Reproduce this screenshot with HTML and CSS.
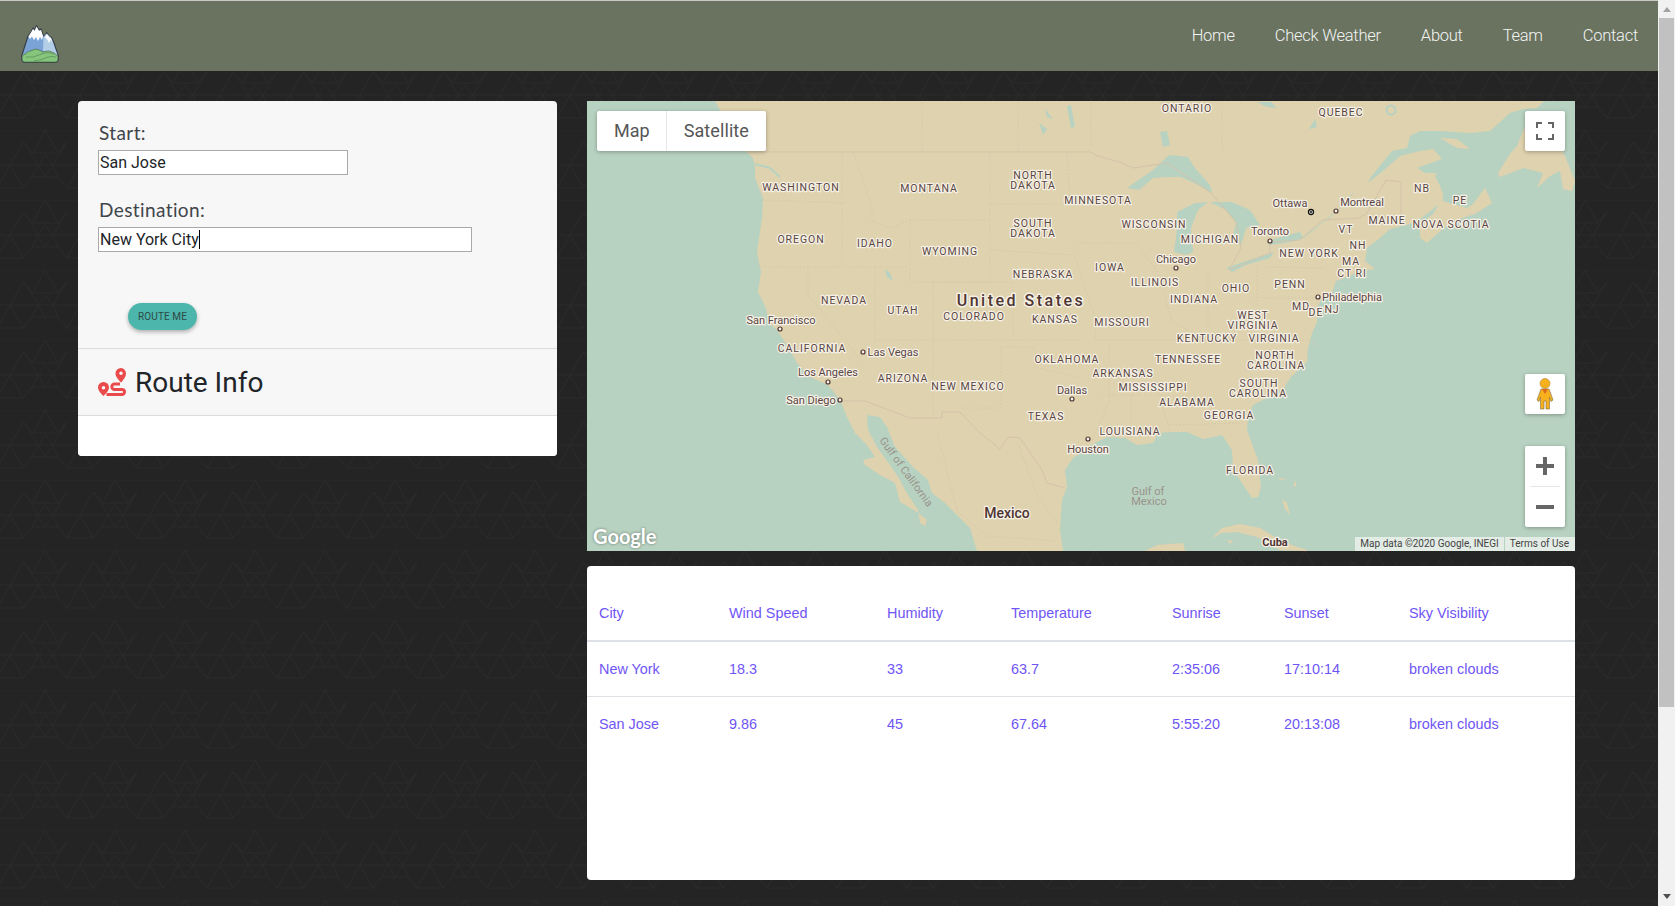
FILE: index.html
```html
<!DOCTYPE html>
<html lang="en">
<head>
    <meta charset="UTF-8">
    <meta name="viewport" content="width=device-width, initial-scale=1.0">
    <title>Route Weather</title>
    <link rel="stylesheet" href="styles.css">
</head>
<body>
<div class="page">

    <!-- Top bar -->
    <header class="site-header">
        <a class="brand" href="#">
            <svg class="brand-logo" viewBox="0 0 38 38" aria-label="logo">
                <path d="M.7 31 L7 11 L10 7 L12 3 L13.5 5 L15.7 .6 L18 5 L20 4 L22 10 L24 12 L25.7 7.5 L28 11 L30.5 12.5 L33 18 L37.3 31 Q38 37.4 34 37.4 H4 Q0 37.4 .7 31 Z" fill="#7ba4d6" stroke="#3b4048" stroke-width="1.2" stroke-linejoin="round"/>
                <path d="M22.5 12 L25.7 8.5 L30.2 13 L36.5 30 L22 26 Z" fill="#b3cfe8"/>
                <path d="M7.5 11.5 L10 7.5 L12 4 L13.5 6 L15.7 1.5 L18 6 L20 5 L22 11 L21 15 L19 12 L17 16 L15 12 L13 15 L11 11.5 L9 14 Z" fill="#fff"/>
                <path d="M24 12.5 L25.7 9 L28 12 L30 13.5 L31.5 18 L29.5 15 L28 18 L26 14 Z" fill="#fff"/>
                <path d="M1.2 31 Q7 25.5 15 24 Q19 25 22 27 Q25 26 28 26 Q33 27 36.9 31 Q37.5 37 34 37 H4 Q.5 37 1.2 31 Z" fill="#86c57c" stroke="#4a6a4c" stroke-width=".7"/>
                <path d="M5 32 Q13 33 18 30 Q26 26 33 29 M13 36 Q22 35 27 32 Q31 31 35 32" fill="none" stroke="#4f7f50" stroke-width=".6"/>
            </svg>
        </a>
        <nav class="site-nav">
            <a href="#">Home</a>
            <a href="#">Check Weather</a>
            <a href="#">About</a>
            <a href="#">Team</a>
            <a href="#">Contact</a>
        </nav>
    </header>

    <main class="content">

        <!-- Route form -->
        <section class="route-card">
            <form class="route-form">
                <label class="field-label" for="start">Start:</label>
                <input class="field field-short" id="start" type="text" value="San Jose">
                <label class="field-label field-label-next" for="destination">Destination:</label>
                <div class="field-wrap">
                    <input class="field field-long" id="destination" type="text" value="New York City">
                    <span class="caret"></span>
                </div>
                <button class="route-btn" type="button">Route me</button>
            </form>
            <div class="route-head">
                <svg class="route-icon" viewBox="0 0 28 28" aria-hidden="true">
                    <path d="M23 0 A5.5 5.5 0 0 0 17.5 5.5 C17.5 8.5 21 12.5 23 14.5 C25 12.5 28 8.5 28 5.5 A5.5 5.5 0 0 0 23 0 Z M23 3.5 A1.8 1.8 0 1 1 23 7.1 A1.8 1.8 0 1 1 23 3.5 Z" fill="#ea4a4c" fill-rule="evenodd"/>
                    <path d="M5.5 14 A5.5 5.5 0 0 0 0 19.5 C0 22.5 3.5 26 5.5 28 C7.5 26 11 22.5 11 19.5 A5.5 5.5 0 0 0 5.5 14 Z M5.5 17.9 A1.8 1.8 0 1 1 5.5 21.5 A1.8 1.8 0 1 1 5.5 17.9 Z" fill="#ea4a4c" fill-rule="evenodd"/>
                    <path d="M22 16 H16.5 A2.7 2.7 0 0 0 16.5 21.4 H24 A2.4 2.4 0 0 1 24 26.4 H8.5" fill="none" stroke="#ea4a4c" stroke-width="3"/>
                </svg>
                <h2 class="route-title">Route Info</h2>
            </div>
            <div class="route-body"></div>
        </section>

        <div class="right-col">

            <!-- Map -->
            <div class="map">
                <svg class="map-canvas" viewBox="0 0 988 450" width="988" height="450">
                    <rect class="water" width="988" height="450"/>
                    <path class="land" d="M128 0 L133 9 L140 28 L150 44 L160 51 L166 57 L168 66 L168 77 L176 97 L175 117 L170 151 L174 171 L171 191 L179 207 L182 222 L190 229 L203 249 L210 262 L223 276 L241 284 L253 299 L260 316 L268 332 L280 344 L288 356 L276 359 L278 364 L293 374 L308 382 L313 401 L330 411 L340 419 L338 425 L333 422 L331 409 L323 397 L318 389 L313 379 L301 361 L290 346 L281 329 L280 314 L293 316 L300 326 L308 346 L326 366 L341 379 L345 392 L358 402 L383 427 L390 450 L476 450 L473 429 L475 399 L480 386 L478 369 L486 357 L508 342 L520 336 L538 337 L550 344 L566 342 L571 332 L585 331 L600 331 L616 338 L635 334 L645 349 L646 367 L653 379 L665 397 L671 396 L674 386 L671 359 L660 329 L661 316 L666 304 L676 299 L697 287 L704 276 L720 261 L721 247 L725 232 L730 221 L730 207 L735 197 L745 192 L749 180 L760 176 L773 170 L788 168 L778 160 L780 147 L793 137 L803 128 L823 123 L836 116 L852 103 L846 113 L833 123 L833 137 L840 142 L851 132 L866 120 L888 113 L905 102 L898 87 L886 103 L880 107 L866 103 L856 100 L856 93 L853 85 L848 75 L850 72 L838 72 L830 67 L855 58 L846 48 L833 50 L813 55 L796 70 L773 88 L766 92 L780 85 L783 77 L805 50 L820 47 L823 35 L833 30 L853 30 L883 32 L903 30 L923 12 L936 8 L950 7 L957 0 Z"/>
                    <path class="land" d="M911 72 L923 53 L930 45 L940 20 L960 25 L978 55 L988 80 L985 90 L976 88 L973 70 L963 75 L950 87 L956 72 L936 67 L913 76 Z"/>
                    <path class="land" d="M853 37 L870 38 L883 48 L870 47 Z"/>
                    <path class="land" d="M625 437 L635 427 L653 423 L673 427 L696 441 L720 449 L720 450 L693 449 L670 436 L650 431 L635 432 Z"/>
                    <path class="land" d="M558 450 L570 444 L596 442 L598 450 Z"/>
                    <path class="land" d="M695 398 L700 402 L703 414 L698 408 Z M691 377 L700 378 L694 379 Z M706 386 L709 379 L709 385 Z M640 439 L646 440 L643 443 Z"/>
                    <!-- Lakes -->
                    <path class="water" d="M540 87 L566 69 L582 54 L601 56 L608 67 L623 84 L625 92 L611 84 L594 76 L580 76 L566 77 L552 89 Z"/>
                    <path class="water" d="M587 151 L590 127 L590 111 L608 102 L621 101 L611 109 L604 127 L606 151 L599 154 Z"/>
                    <path class="water" d="M623 101 L645 101 L663 109 L673 124 L659 127 L654 144 L645 141 L649 121 L639 109 Z"/>
                    <path class="water" d="M639 167 L656 161 L687 151 L683 157 L659 164 L645 171 Z"/>
                    <path class="water" d="M680 141 L690 137 L713 131 L716 137 L704 141 L683 144 Z"/>
                    <path class="water" d="M573 31 L580 30 L583 44 L576 46 Z M480 5 L484 4 L488 26 L484 27 Z M452 22 L460 28 L456 34 Z M670 1 L684 1 L690 7 L680 6 Z M722 28 L728 18 L730 26 Z M298 168 L303 172 L306 180 L300 176 Z M458 8 L466 18 L460 16 Z"/>
                    <path class="river" d="M168 63 L183 67 L193 76"/>
                    <path class="river river-thin" d="M716 137 L735 122 L750 110 L766 92"/>
                    <circle class="ring" cx="804" cy="9" r="4.5"/>
                    <!-- State lines -->
                    <path class="state" d="M255 51 V164 M176 99 L260 102 M171 166 H321 M266 51 L277 81 L285 106 V120 L303 127 L323 119 M323 119 H403 V181 H323 Z M335 1 V51 M431 1 V51 M403 51 V119 M403 103 H483 M403 149 L487 154 M480 51 L483 103 M288 166 V239 M221 166 V194 L275 260 M346 181 V317 M346 181 H426 V239 M288 239 H493 M414 246 V307 H373 M414 246 H448 V266 L493 277 M504 1 V45 M489 142 H549 M487 154 L509 219 M509 219 L508 239 H721 L732 246 M515 294 H601 M544 294 V322 M573 294 L582 329 M582 324 L656 322 M621 171 V225 M670 164 V205 M678 166 L738 167 M666 197 H731 M549 142 L570 170 L585 220 L620 240 M635 0 V40 L636 50 M522 239 V300 L505 340 M432 345 L450 395 L470 420 M350 330 L370 410 L400 435 L470 440"/>
                    <!-- Country lines -->
                    <path class="border" d="M160 51 H504 L508 54 L532 61 L546 67 L580 62 L623 91 L649 121 L654 147 L642 169 L683 152 L683 141 L713 139 L735 119 L773 117 L780 112 L799 79 L814 81 L814 117 L816 125"/>
                    <path class="border" d="M256 300 H278 L323 317 H355 V311 H373 L393 332 L413 348 L421 336 L433 337 L455 369 L460 382 L478 387"/>
                    <!-- Regions -->
                    <g class="lbl-state">
                        <text x="599" y="7">ONTARIO</text><text x="753" y="11">QUEBEC</text>
                        <text x="213" y="86">WASHINGTON</text><text x="341" y="87">MONTANA</text>
                        <text x="445" y="74">NORTH</text><text x="445" y="84">DAKOTA</text>
                        <text x="445" y="122">SOUTH</text><text x="445" y="132">DAKOTA</text>
                        <text x="213" y="138">OREGON</text><text x="287" y="142">IDAHO</text>
                        <text x="362" y="150">WYOMING</text><text x="455" y="173">NEBRASKA</text>
                        <text x="256" y="199">NEVADA</text><text x="315" y="209">UTAH</text>
                        <text x="386" y="215">COLORADO</text><text x="467" y="218">KANSAS</text>
                        <text x="510" y="99">MINNESOTA</text><text x="566" y="123">WISCONSIN</text>
                        <text x="622" y="138">MICHIGAN</text><text x="522" y="166">IOWA</text>
                        <text x="567" y="181">ILLINOIS</text><text x="606" y="198">INDIANA</text>
                        <text x="648" y="187">OHIO</text><text x="702" y="183">PENN</text>
                        <text x="721" y="152">NEW YORK</text><text x="799" y="119">MAINE</text>
                        <text x="834" y="87">NB</text><text x="872" y="99">PE</text>
                        <text x="863" y="123">NOVA SCOTIA</text><text x="758" y="128">VT</text>
                        <text x="770" y="144">NH</text><text x="763" y="160">MA</text>
                        <text x="764" y="172">CT RI</text><text x="713" y="205">MD</text>
                        <text x="728" y="211">DE</text><text x="744" y="208">NJ</text>
                        <text x="665" y="214">WEST</text><text x="665" y="224">VIRGINIA</text>
                        <text x="534" y="221">MISSOURI</text><text x="619" y="237">KENTUCKY</text>
                        <text x="686" y="237">VIRGINIA</text><text x="600" y="258">TENNESSEE</text>
                        <text x="687" y="254">NORTH</text><text x="688" y="264">CAROLINA</text>
                        <text x="479" y="258">OKLAHOMA</text><text x="535" y="272">ARKANSAS</text>
                        <text x="565" y="286">MISSISSIPPI</text><text x="671" y="282">SOUTH</text>
                        <text x="670" y="292">CAROLINA</text><text x="599" y="301">ALABAMA</text>
                        <text x="641" y="314">GEORGIA</text><text x="458" y="315">TEXAS</text>
                        <text x="542" y="330">LOUISIANA</text><text x="662" y="369">FLORIDA</text>
                        <text x="224" y="247">CALIFORNIA</text><text x="315" y="277">ARIZONA</text>
                        <text x="380" y="285">NEW MEXICO</text>
                    </g>
                    <!-- Cities -->
                    <g class="lbl-city">
                        <text x="194" y="219">San Francisco</text><text x="589" y="158">Chicago</text>
                        <text x="683" y="130">Toronto</text><text x="703" y="102">Ottawa</text>
                        <text x="775" y="101">Montreal</text><text x="765" y="196">Philadelphia</text>
                        <text x="485" y="289">Dallas</text><text x="501" y="348">Houston</text>
                        <text x="306" y="251">Las Vegas</text><text x="241" y="271">Los Angeles</text>
                        <text x="224" y="299">San Diego</text>
                    </g>
                    <g class="dots">
                        <circle cx="193" cy="228" r="2"/><circle cx="589" cy="167" r="2"/>
                        <circle cx="683" cy="140" r="2"/><circle cx="749" cy="110" r="2"/>
                        <circle cx="731" cy="196" r="2"/><circle cx="485" cy="298" r="2"/>
                        <circle cx="501" cy="338" r="2"/><circle cx="276" cy="251" r="2"/>
                        <circle cx="241" cy="281" r="2"/><circle cx="253" cy="299" r="2"/>
                    </g>
                    <circle class="capital" cx="724" cy="111" r="2.5"/>
                    <circle class="capital-in" cx="724" cy="111" r="1"/>
                    <text class="lbl-country" x="434" y="199">United States</text>
                    <text class="lbl-big" x="420" y="412">Mexico</text>
                    <text class="lbl-small" x="688" y="441">Cuba</text>
                    <g class="lbl-sea">
                        <text x="561" y="390">Gulf of</text><text x="562" y="400">Mexico</text>
                        <text transform="translate(319 371) rotate(54)">Gulf of California</text>
                    </g>
                </svg>

                <div class="map-type">
                    <button class="map-type-btn" type="button">Map</button>
                    <button class="map-type-btn map-type-sat" type="button">Satellite</button>
                </div>
                <button class="map-ctl map-full" type="button" aria-label="Fullscreen">
                    <svg viewBox="0 0 18 18" width="18" height="18">
                        <path d="M1 6 V1 H6 M12 1 H17 V6 M17 12 V17 H12 M6 17 H1 V12" fill="none" stroke="#666" stroke-width="2"/>
                    </svg>
                </button>
                <button class="map-ctl map-peg" type="button" aria-label="Street View">
                    <svg viewBox="0 0 18 32" width="18" height="32">
                        <circle cx="9" cy="5.5" r="5" fill="#f7b01e" stroke="#a98a3e" stroke-width=".6"/>
                        <path d="M5 11 H13 L17 22 L15 23.5 L13.5 19 V31 H10 V23 H8 V31 H4.5 V19 L3 23.5 L1 22 Z" fill="#f7b01e" stroke="#8d7a4a" stroke-width=".7"/>
                        <path d="M6 11 H12 L9 16 Z" fill="#dd6a1f"/>
                    </svg>
                </button>
                <div class="map-zoom">
                    <button class="map-zoom-btn" type="button" aria-label="Zoom in">
                        <svg viewBox="0 0 18 18" width="18" height="18"><path d="M0 9 H18 M9 0 V18" stroke="#666" stroke-width="4"/></svg>
                    </button>
                    <button class="map-zoom-btn map-zoom-out" type="button" aria-label="Zoom out">
                        <svg viewBox="0 0 18 18" width="18" height="18"><path d="M0 9 H18" stroke="#666" stroke-width="4"/></svg>
                    </button>
                </div>
                <span class="map-logo">Google</span>
                <div class="map-credit">
                    <span>Map data ©2020 Google, INEGI</span>
                    <span class="map-terms">Terms of Use</span>
                </div>
            </div>

            <!-- Weather table -->
            <div class="weather-card">
                <table class="weather-table">
                    <colgroup>
                        <col class="c-city"><col class="c-wind"><col class="c-hum"><col class="c-temp">
                        <col class="c-rise"><col class="c-set"><col>
                    </colgroup>
                    <thead>
                        <tr>
                            <th>City</th><th>Wind Speed</th><th>Humidity</th><th>Temperature</th>
                            <th>Sunrise</th><th>Sunset</th><th>Sky Visibility</th>
                        </tr>
                    </thead>
                    <tbody>
                        <tr>
                            <td>New York</td><td>18.3</td><td>33</td><td>63.7</td>
                            <td>2:35:06</td><td>17:10:14</td><td>broken clouds</td>
                        </tr>
                        <tr>
                            <td>San Jose</td><td>9.86</td><td>45</td><td>67.64</td>
                            <td>5:55:20</td><td>20:13:08</td><td>broken clouds</td>
                        </tr>
                    </tbody>
                </table>
            </div>
        </div>
    </main>
</div>

<!-- Browser scrollbar -->
<div class="scrollbar">
    <span class="scroll-up"></span>
    <span class="scroll-thumb"></span>
    <span class="scroll-down"></span>
</div>
</body>
</html>
```

FILE: styles.css
```css
* {
    margin: 0;
    padding: 0;
    box-sizing: border-box;
}

body {
    display: flex;
    height: 906px;
    overflow: hidden;
    font-family: "Roboto", sans-serif;
    background-color: #242424;
}

.page {
    flex: 1;
    display: flex;
    flex-direction: column;
    min-width: 0;
}

/* Top bar */
.site-header {
    display: flex;
    align-items: center;
    justify-content: space-between;
    height: 71px;
    border-top: 1px solid #c9c9c9;
    background-color: #69735f;
}

.brand {
    display: block;
    margin-left: 21px;
    height: 38px;
    margin-top: 15px;
}

.brand-logo {
    display: block;
    width: 38px;
    height: 38px;
}

.site-nav {
    display: flex;
    margin-bottom: 2px;
}

.site-nav a {
    padding: 0 20px;
    font-size: 16.5px;
    font-weight: 300;
    letter-spacing: -.25px;
    color: #f4f4f4;
    text-decoration: none;
}

/* Page body */
.content {
    flex: 1;
    display: flex;
    align-items: flex-start;
    gap: 30px;
    padding: 30px 83px 0 78px;
    background-color: #242424;
    background-image: url("data:image/svg+xml,%3Csvg xmlns='http://www.w3.org/2000/svg' width='70' height='70'%3E%3Cpath d='M0 0H70M0 35H70M35 0L23 23H48L35 0M0 35L-13 58H13L0 35M70 35L57 58H83L70 35M13 12L0 35M70 35L83 12M57 12L43 35M15 13L28 35M35 25L28 35L35 47L43 35L35 25M22 47H48M22 47L28 35M48 47L43 35M23 23L13 12M48 23L57 12M13 58L22 47M57 58L48 47' fill='none' stroke='%232a2a2a' stroke-width='1'/%3E%3C/svg%3E");
    background-position: 10px -11px;
}

/* Route card */
.route-card {
    width: 479px;
    flex-shrink: 0;
    border-radius: 4px;
    overflow: hidden;
    background-color: #f7f7f7;
}

.route-form {
    display: flex;
    flex-direction: column;
    align-items: flex-start;
    padding: 18px 20px;
    border-bottom: 1px solid #dcdcdc;
}

.field-label {
    height: 28px;
    margin-bottom: 3px;
    padding-left: 1px;
    font-family: "Lato", sans-serif;
    font-size: 19px;
    line-height: 28px;
    letter-spacing: .4px;
    color: #40454a;
}

.field-label-next {
    margin-top: 21px;
}

.field {
    display: block;
    height: 25px;
    padding: 0 1px;
    border: 1px solid #a9a9a9;
    border-radius: 0;
    font-family: "Roboto", sans-serif;
    font-size: 16px;
    color: #212529;
    background-color: #fff;
}

.field-short {
    width: 250px;
}

.field-long {
    width: 374px;
}

.field-wrap {
    position: relative;
}

.caret {
    position: absolute;
    left: 101px;
    top: 3px;
    width: 1px;
    height: 19px;
    background-color: #000;
}

.route-btn {
    width: 69px;
    height: 27px;
    margin: 51px 0 0 30px;
    border: 0;
    border-radius: 14px;
    font-family: "Roboto", sans-serif;
    font-size: 10px;
    letter-spacing: .1px;
    text-transform: uppercase;
    color: #2c4a47;
    background-color: #4db6ac;
    box-shadow: 0 2px 4px rgba(0, 0, 0, 0.3);
}

.route-head {
    display: flex;
    align-items: center;
    gap: 9px;
    height: 67px;
    padding: 0 20px;
    border-bottom: 1px solid #dcdcdc;
}

.route-icon {
    width: 28px;
    height: 28px;
    flex-shrink: 0;
}

.route-title {
    font-size: 28px;
    font-weight: 400;
    color: #212529;
}

.route-body {
    height: 40px;
    background-color: #fff;
}

/* Map */
.right-col {
    width: 988px;
    flex-shrink: 0;
    display: flex;
    flex-direction: column;
    gap: 15px;
}

.map {
    position: relative;
    height: 450px;
    overflow: hidden;
}

.map-canvas {
    display: block;
}

.water {
    fill: #b8d2c1;
}

.land {
    fill: #dfd2ae;
}

.river {
    fill: none;
    stroke: #b8d2c1;
    stroke-width: 2;
}

.river-thin {
    stroke-width: 1;
}

.ring {
    fill: none;
    stroke: #b8d2c1;
    stroke-width: 2;
}

.state {
    fill: none;
    stroke: #d3c8a9;
    stroke-width: 1;
    stroke-dasharray: 1.5 2;
}

.border {
    fill: none;
    stroke: #d3c3aa;
    stroke-width: 1;
}

.map-canvas text {
    font-family: "Roboto", sans-serif;
    text-anchor: middle;
    dominant-baseline: central;
    paint-order: stroke;
    stroke: #f5f1e6;
    stroke-linejoin: round;
    fill: #5b4543;
}

.lbl-state {
    transform: translateX(1px);
}

.lbl-state text {
    font-size: 10.5px;
    letter-spacing: .95px;
    stroke-width: 2.5px;
}

.lbl-city text {
    font-size: 11px;
    stroke-width: 2.5px;
}

.dots circle {
    fill: #f5f1e6;
    stroke: #523735;
    stroke-width: 1.2;
}

.capital {
    fill: #f5f1e6;
    stroke: #111;
    stroke-width: 1.3;
}

.capital-in {
    fill: #111;
}

.map-canvas .lbl-country {
    font-size: 16px;
    font-weight: 500;
    letter-spacing: 2.5px;
    stroke-width: 3px;
    fill: #4f3533;
}

.map-canvas .lbl-big {
    font-size: 14px;
    font-weight: 500;
    stroke-width: 2.5px;
    fill: #4f3533;
}

.map-canvas .lbl-small {
    font-size: 11px;
    font-weight: 700;
    stroke-width: 2.5px;
    fill: #4f3533;
}

.map-canvas .lbl-sea text {
    font-size: 11px;
    stroke: none;
    fill: #9a938c;
}

/* Map controls lie over the map */
.map-type {
    position: absolute;
    left: 10px;
    top: 10px;
    display: flex;
    height: 40px;
    border-radius: 2px;
    background-color: #fff;
    box-shadow: 0 1px 4px rgba(0, 0, 0, 0.3);
}

.map-type-btn {
    padding: 0 16px 2px 17px;
    border: 0;
    font-family: "Roboto", sans-serif;
    font-size: 18px;
    color: #565656;
    background: none;
}

.map-type-sat {
    padding-right: 17px;
    letter-spacing: .1px;
    border-left: 1px solid #e6e6e6;
}

.map-ctl {
    position: absolute;
    right: 10px;
    display: flex;
    align-items: center;
    justify-content: center;
    width: 40px;
    height: 40px;
    border: 0;
    border-radius: 2px;
    background-color: #fff;
    box-shadow: 0 1px 4px rgba(0, 0, 0, 0.3);
}

.map-full {
    top: 10px;
}

.map-peg {
    top: 273px;
}

.map-zoom {
    position: absolute;
    right: 10px;
    top: 345px;
    width: 40px;
    border-radius: 2px;
    background-color: #fff;
    box-shadow: 0 1px 4px rgba(0, 0, 0, 0.3);
}

.map-zoom-btn {
    display: flex;
    align-items: center;
    justify-content: center;
    width: 100%;
    height: 40px;
    border: 0;
    background: none;
}

.map-zoom-out {
    position: relative;
    height: 41px;
}

.map-zoom-out::before {
    content: "";
    position: absolute;
    left: 5px;
    right: 5px;
    top: 0;
    height: 1px;
    background-color: #e6e6e6;
}

.map-logo {
    position: absolute;
    left: 6px;
    bottom: 3px;
    font-family: "Lato", sans-serif;
    font-size: 20px;
    font-weight: 700;
    color: #fff;
    text-shadow: 0 0 3px rgba(0, 0, 0, 0.45);
}

.map-credit {
    position: absolute;
    right: 0;
    bottom: 0;
    display: flex;
    height: 14px;
    font-size: 10px;
    line-height: 14px;
    color: #444;
}

.map-credit span {
    padding: 0 5px;
    background-color: rgba(255, 255, 255, 0.6);
}

.map-credit .map-terms {
    margin-left: 1px;
    padding-right: 6px;
}

/* Weather table */
.weather-card {
    height: 314px;
    padding-top: 19px;
    border-radius: 4px;
    overflow: hidden;
    background-color: #fff;
}

.weather-table {
    width: 100%;
    table-layout: fixed;
    border-collapse: collapse;
    font-family: "Liberation Sans", sans-serif;
    font-size: 14.4px;
    color: #6f55f5;
}

.c-city { width: 130px; }
.c-wind { width: 158px; }
.c-hum { width: 124px; }
.c-temp { width: 161px; }
.c-rise { width: 112px; }
.c-set { width: 125px; }

.weather-table th,
.weather-table td {
    height: 55px;
    padding: 0 12px;
    text-align: left;
    font-weight: 400;
}

.weather-table th {
    height: 56px;
    border-bottom: 2px solid #dee2e6;
}

.weather-table tbody tr:first-child td {
    border-bottom: 1px solid #dee2e6;
}

/* Browser scrollbar */
.scrollbar {
    display: flex;
    flex-direction: column;
    align-items: center;
    width: 17px;
    flex-shrink: 0;
    background-color: #f1f1f1;
}

.scroll-up,
.scroll-down {
    width: 0;
    height: 0;
    border-left: 4px solid transparent;
    border-right: 4px solid transparent;
}

.scroll-up {
    margin: 7px 0 6px;
    border-bottom: 5px solid #a3a3a3;
}

.scroll-thumb {
    width: 15px;
    height: 689px;
    background-color: #c1c1c1;
}

.scroll-down {
    margin-top: auto;
    margin-bottom: 7px;
    border-top: 5px solid #505050;
}
```
